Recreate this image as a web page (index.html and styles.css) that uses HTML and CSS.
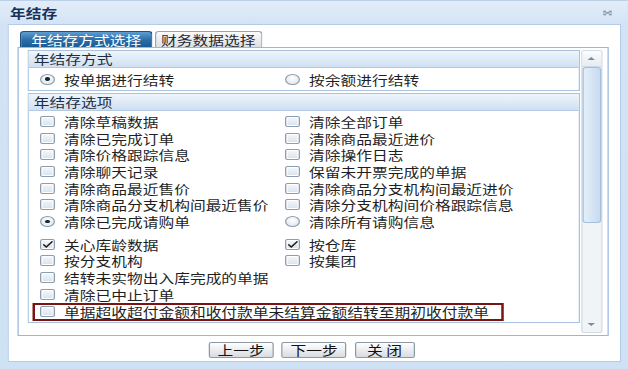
FILE: index.html
```html
<!DOCTYPE html>
<html>
<head>
    <meta charset="utf-8">
    <link rel="stylesheet" href="styles.css">
</head>
<body>
<div class="win">
    <div class="win-head">
        <span class="win-title">年结存</span>
        <svg class="win-tool" width="8" height="6" viewBox="0 0 8 6">
            <path d="M1 1 L7 5 M7 1 L1 5 M1 1 L1 2.5 M1 1 L2.5 1 M7 5 L7 3.5 M7 5 L5.5 5 M7 1 L5.5 1 M7 1 L7 2.5 M1 5 L2.5 5 M1 5 L1 3.5" stroke="#8a9bad" stroke-width="1" fill="none"/>
        </svg>
    </div>
    <div class="win-body">
        <div class="tab-strip">
            <span class="tab active">年结存方式选择</span>
            <span class="tab second">财务数据选择</span>
        </div>
        <div class="tab-panel">
            <div class="scroll">
                <div class="content">
                    <div class="fs">
                        <div class="fs-head">年结存方式</div>
                        <div class="fs-body radios">
                            <div class="opt"><span class="rb on"></span>按单据进行结转</div>
                            <div class="opt"><span class="rb"></span>按余额进行结转</div>
                        </div>
                    </div>
                    <div class="fs">
                        <div class="fs-head">年结存选项</div>
                        <div class="fs-body opts">
                            <div class="opt"><span class="cb"></span>清除草稿数据</div>
                            <div class="opt"><span class="cb"></span>清除全部订单</div>
                            <div class="opt"><span class="cb"></span>清除已完成订单</div>
                            <div class="opt"><span class="cb"></span>清除商品最近进价</div>
                            <div class="opt"><span class="cb"></span>清除价格跟踪信息</div>
                            <div class="opt"><span class="cb"></span>清除操作日志</div>
                            <div class="opt"><span class="cb"></span>清除聊天记录</div>
                            <div class="opt"><span class="cb"></span>保留未开票完成的单据</div>
                            <div class="opt"><span class="cb"></span>清除商品最近售价</div>
                            <div class="opt"><span class="cb"></span>清除商品分支机构间最近进价</div>
                            <div class="opt"><span class="cb"></span>清除商品分支机构间最近售价</div>
                            <div class="opt"><span class="cb"></span>清除分支机构间价格跟踪信息</div>
                            <div class="opt"><span class="rb on"></span>清除已完成请购单</div>
                            <div class="opt"><span class="rb"></span>清除所有请购信息</div>
                            <div class="spacer"></div>
                            <div class="opt"><span class="cb on"><svg width="12" height="11" viewBox="0 0 12 11"><path d="M2.6 5.4 L5 8 L10 2.4" stroke="#1c1c1c" stroke-width="1.4" fill="none"/></svg></span>关心库龄数据</div>
                            <div class="opt"><span class="cb on"><svg width="12" height="11" viewBox="0 0 12 11"><path d="M2.6 5.4 L5 8 L10 2.4" stroke="#1c1c1c" stroke-width="1.4" fill="none"/></svg></span>按仓库</div>
                            <div class="opt"><span class="cb"></span>按分支机构</div>
                            <div class="opt"><span class="cb"></span>按集团</div>
                            <div class="opt wide"><span class="cb"></span>结转未实物出入库完成的单据</div>
                            <div class="opt wide"><span class="cb"></span>清除已中止订单</div>
                            <div class="opt wide mark"><span class="cb"></span>单据超收超付金额和收付款单未结算金额结转至期初收付款单</div>
                        </div>
                    </div>
                </div>
                <div class="vscroll">
                    <div class="sb-btn up"><span class="arrow"></span></div>
                    <div class="thumb"></div>
                    <div class="track"></div>
                    <div class="sb-btn down"><span class="arrow"></span></div>
                </div>
            </div>
        </div>
        <div class="btns">
            <button class="btn">上一步</button>
            <button class="btn">下一步</button>
            <button class="btn close">关 闭</button>
        </div>
    </div>
</div>
</body>
</html>
```

FILE: styles.css
```css
* {
    box-sizing: border-box;
}

body {
    margin: 0;
    overflow: hidden;
    background: #d2e3f5;
    font-family: "Noto Sans CJK SC", "Noto Sans", sans-serif;
    font-size: 12.6px;
    line-height: 15px;
    color: #1f1f1f;
}

/* the whole dialog is drawn wide, as in the screenshot */
.win {
    width: 502.4px;
    height: 369px;
    transform: scaleX(1.25);
    transform-origin: 0 0;
    background: linear-gradient(#e2edf9, #d3e3f5 24px, #cfe1f5);
    border-top: 1px solid #bcd1e8;
}

.win-head {
    height: 23px;
    display: flex;
    align-items: center;
    justify-content: space-between;
    padding: 0 12px 0 8px;
}

.win-title {
    font-weight: bold;
    color: #17335c;
}

.win-body {
    margin: 0 5.6px;
    height: 338px;
    background: #fff;
    border: 1px solid #b3cbe6;
    padding: 6px 8.6px 0 7.8px;
}

.tab-strip {
    display: flex;
    gap: 1.6px;
    padding-left: 1.6px;
    height: 16px;
}

.tab {
    height: 16px;
    border: 1px solid #8ea8c4;
    border-bottom: none;
    border-radius: 3px 3px 0 0;
    background: linear-gradient(#fbfbfb, #dedfe0);
    line-height: 15px;
    color: #1f2a36;
    text-align: center;
    white-space: nowrap;
}

.tab.active {
    width: 106px;
    background: linear-gradient(#5e9dd2, #2b6ca6 55%, #1b5b94);
    border-color: #1f5283;
    color: #fff;
}

.tab.second {
    width: 86px;
}

.tab-panel {
    height: 289px;
    border: 1px solid #98b8dc;
    padding: 2px 4.6px 2px 6.2px;
}

.scroll {
    display: flex;
    height: 283px;
}

.content {
    flex: 1;
    overflow: hidden;
}

.fs {
    border: 1px solid #a8c2de;
}

.fs + .fs {
    margin-top: 2px;
}

.fs-head {
    height: 17px;
    padding-left: 4.4px;
    line-height: 16px;
    background: linear-gradient(#eef5fc, #cfe0f2);
    border-bottom: 1px solid #b2cae3;
    color: #1e2d40;
}

.fs-body {
    display: grid;
    grid-template-columns: 196px 1fr;
    padding-left: 9.4px;
}

.radios {
    height: 22px;
    align-items: center;
}

.opts {
    padding-top: 2px;
    padding-bottom: 1.3px;
}

.opt {
    display: flex;
    align-items: center;
    height: 16.7px;
    white-space: nowrap;
}

.opt.wide {
    grid-column: 1 / -1;
}

.opt.mark {
    width: 377px;
    height: 18px;
    margin-left: -5.6px;
    padding-left: 3.6px;
    border: 2px solid #7a1313;
}

.spacer {
    grid-column: 1 / -1;
    height: 6px;
}

.cb {
    width: 12px;
    height: 11px;
    margin-right: 7.2px;
    flex-shrink: 0;
    border: 1px solid #8c9db1;
    border-radius: 2px;
    background: linear-gradient(#f6f8fb, #d7e1eb);
    box-shadow: inset 0 0 0 1px #fff;
    display: flex;
}

.cb svg {
    margin: -1px;
}

.rb {
    width: 12px;
    height: 11px;
    margin-right: 7.2px;
    flex-shrink: 0;
    border: 1px solid #8d9cad;
    border-radius: 50%;
    background: radial-gradient(circle at 50% 35%, #ffffff, #d9e2ec);
    display: flex;
    align-items: center;
    justify-content: center;
}

.rb.on::after {
    content: "";
    width: 3.4px;
    height: 3.4px;
    border-radius: 50%;
    background: #1d2630;
}

.vscroll {
    width: 17px;
    margin-left: 0.8px;
    display: flex;
    flex-direction: column;
    background: #f1f4f7;
    border: 1px solid #d0dbe6;
    border-radius: 2px;
}

.sb-btn {
    height: 16px;
    display: flex;
    align-items: center;
    justify-content: center;
}

.sb-btn.up {
    background: linear-gradient(#fbfcfd, #e6ecf2);
    border-bottom: 1px solid #ccd8e4;
}

.arrow {
    border: 3px solid transparent;
}

.up .arrow {
    border-top: 0;
    border-bottom-color: #7d8b99;
}

.down .arrow {
    border-bottom: 0;
    border-top-color: #7d8b99;
}

.thumb {
    height: 156px;
    border: 1px solid #a3bfdb;
    border-radius: 3px;
    background: linear-gradient(90deg, #e4eef9, #c8dbef);
}

.track {
    flex: 1;
}

.btns {
    display: flex;
    justify-content: center;
    gap: 6.4px;
    margin-top: 6px;
    padding-right: 3px;
}

.btn {
    width: 52px;
    height: 16px;
    padding: 0;
    font: inherit;
    line-height: 14px;
    color: #111;
    border: 1px solid #8e99a6;
    border-radius: 2px;
    background: linear-gradient(#fefefe, #d8dce1);
}

.btn.close {
    width: 48px;
}
```
